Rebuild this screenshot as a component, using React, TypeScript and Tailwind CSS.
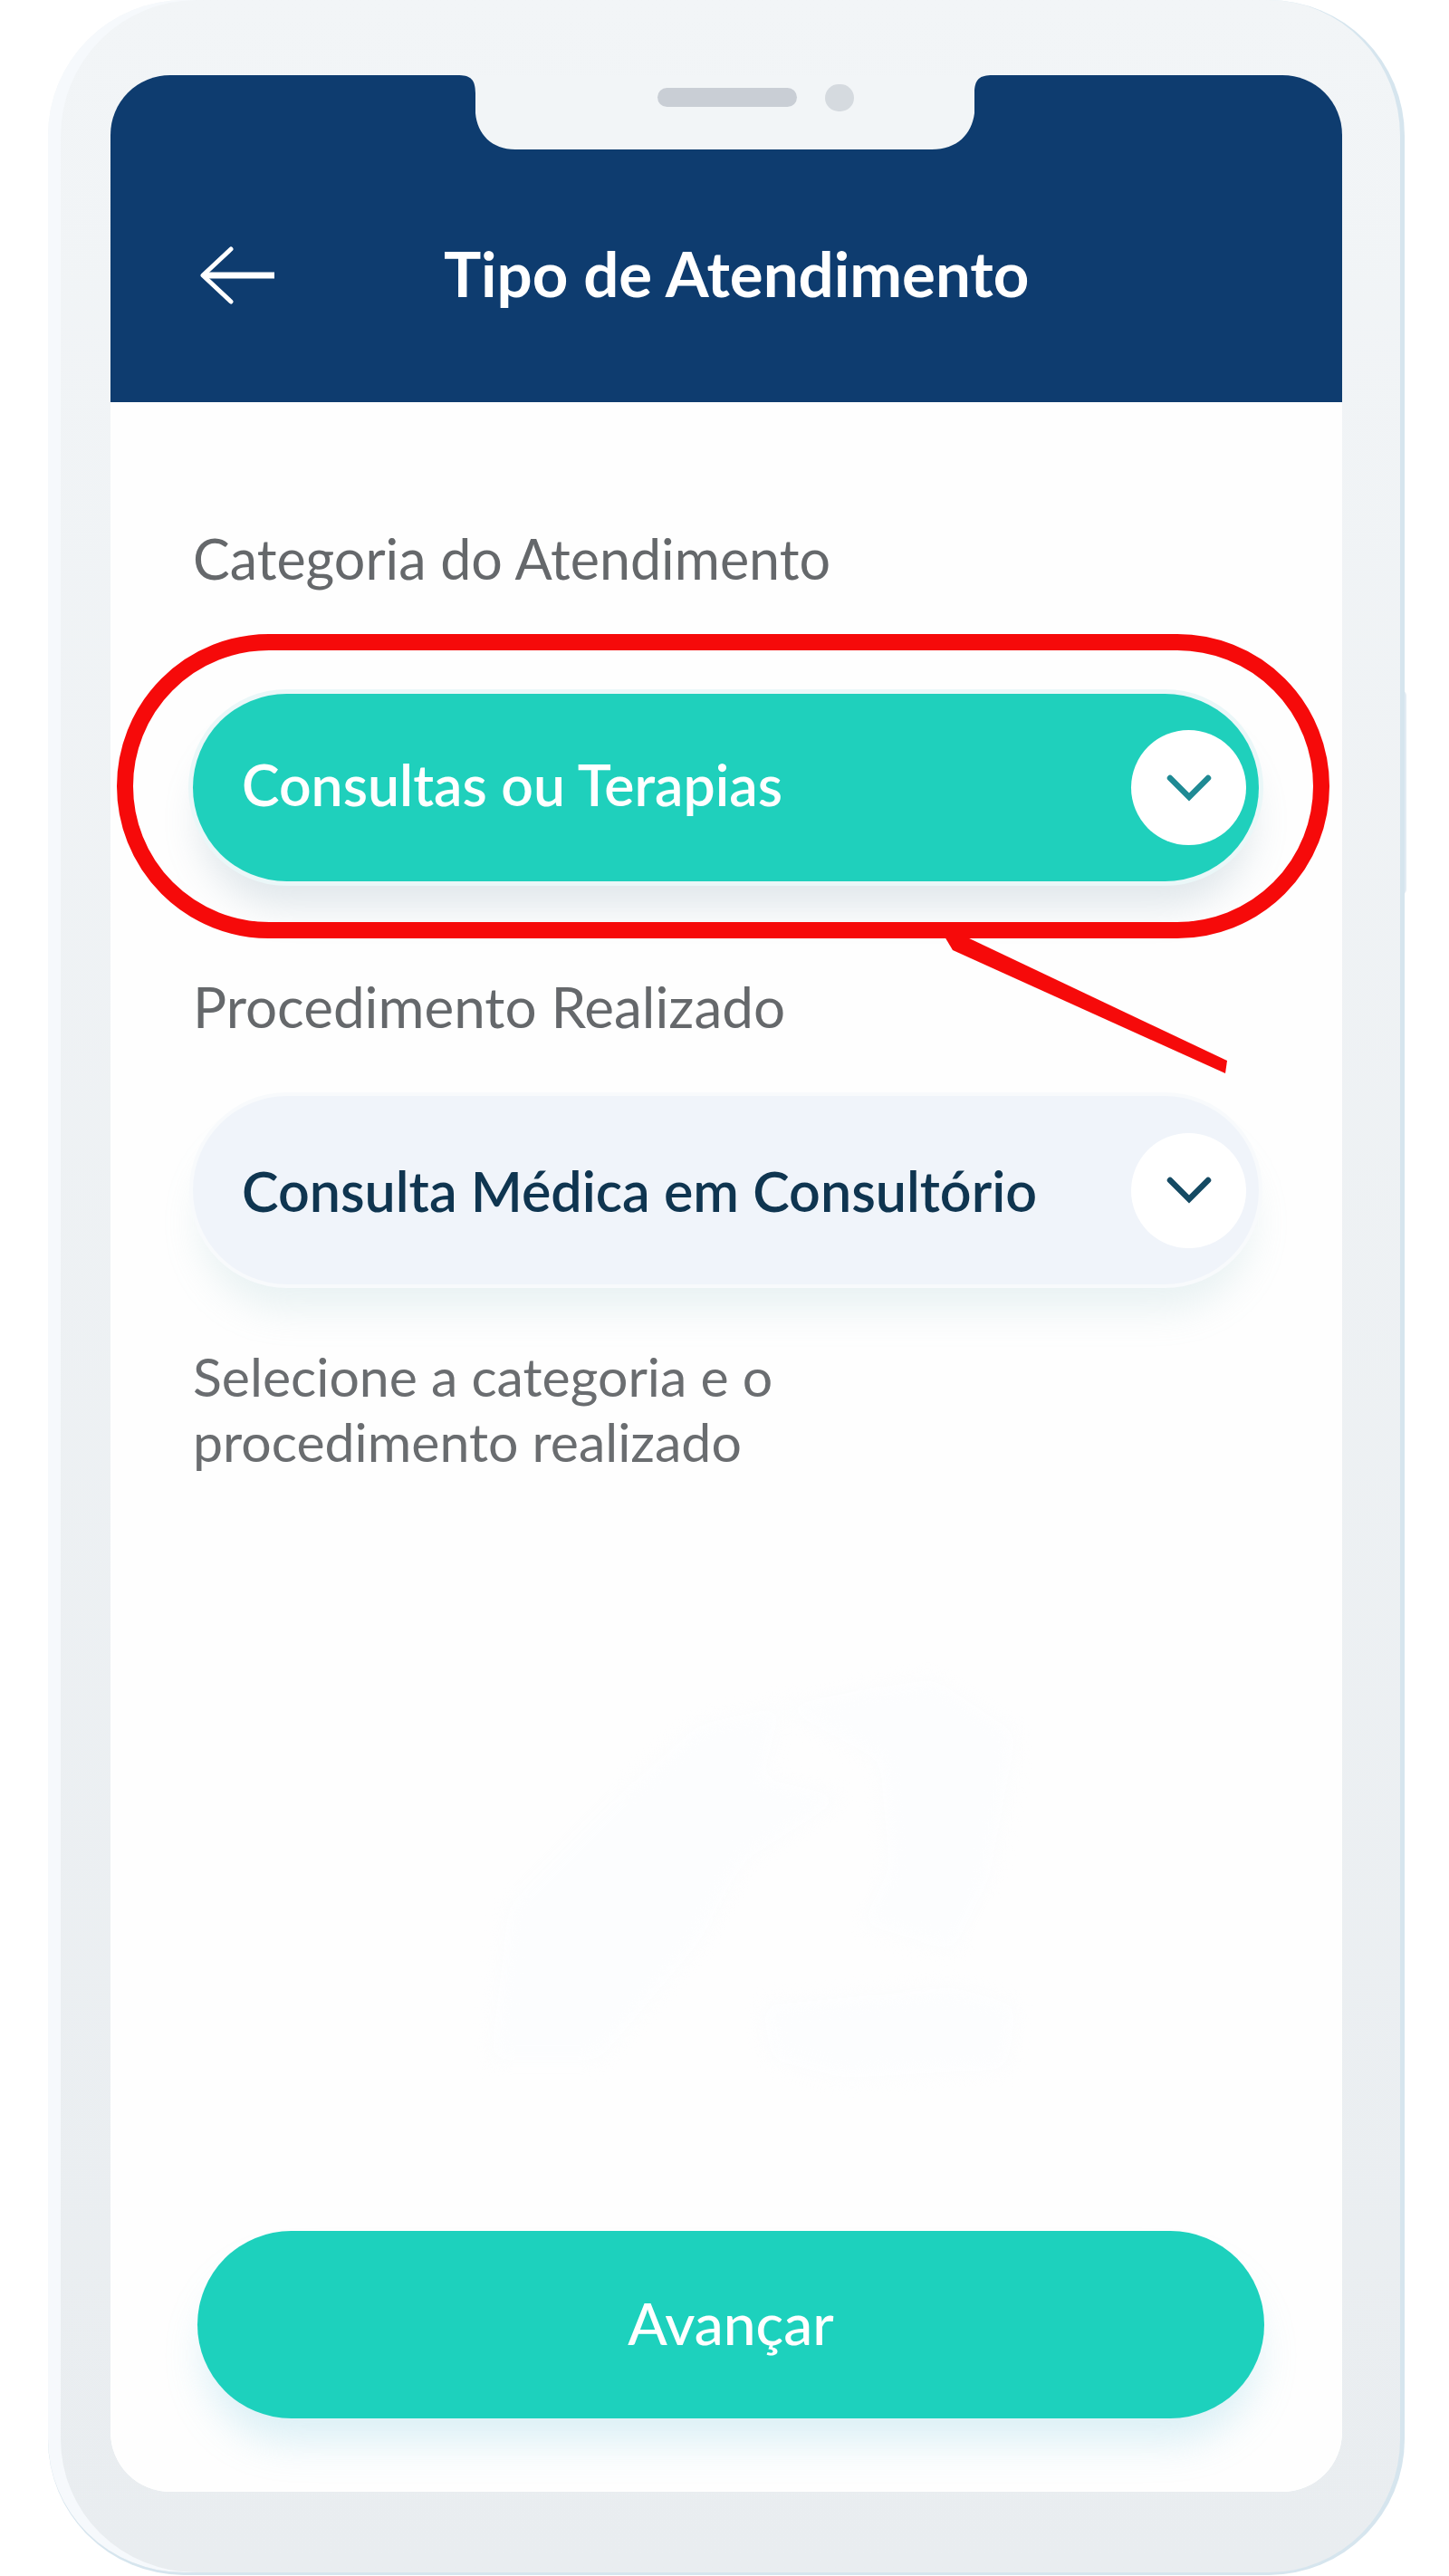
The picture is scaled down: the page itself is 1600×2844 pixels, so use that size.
import React from "react";

function Chevron({ color }: { color: string }) {
  return (
    <svg width="50" height="32" viewBox="0 0 50 32" fill="none">
      <path d="M4 5 L25 26 L46 5" stroke={color} strokeWidth="6.5" strokeLinecap="round" strokeLinejoin="miter" />
    </svg>
  );
}

function Select({ label, active }: { label: string; active: boolean }) {
  return (
    <div
      className={
        active
          ? "flex h-[207px] items-center justify-between rounded-full bg-[#1fd0bc] pl-[54px] pr-[14px] shadow-[0_0_0_5px_#eaf7f8,0_36px_40px_-8px_rgba(130,160,175,0.24)]"
          : "flex h-[208px] items-center justify-between rounded-full bg-[#f0f4fa] pl-[54px] pr-[14px] shadow-[0_0_0_4px_#f8fafc,0_36px_40px_-8px_rgba(160,200,205,0.22)]"
      }
    >
      <span
        className={
          active
            ? "pb-[6px] text-[62.5px] font-semibold leading-none text-white"
            : "text-[61px] font-semibold leading-none text-[#0f3550]"
        }
      >
        {label}
      </span>
      <span className="flex h-[127px] w-[127px] items-center justify-center rounded-full bg-white">
        <Chevron color={active ? "#1f8a94" : "#154a63"} />
      </span>
    </div>
  );
}

export default function App() {
  return (
    <div className="relative h-[2844px] w-[1600px] overflow-hidden bg-white font-['Lato','Liberation_Sans',sans-serif]">
      <div className="absolute right-[47px] top-[762px] h-[226px] w-[8px] rounded-r-md bg-[#e3ecf3]" />
      <div className="relative ml-[53px] h-[2843px] w-[1498px] rounded-[150px] border-r-[5px] border-b-[3px] border-[#d6e5ee] bg-linear-to-b from-[#f2f5f7] to-[#e9edf0] pl-[69px] pr-[64px] pt-[83px] shadow-[inset_14px_0_0_#f6f9fc]">
        <div className="relative flex h-[2668px] flex-col overflow-hidden rounded-[66px] bg-white">
          <header className="relative flex h-[361px] shrink-0 items-start bg-[#0e3c6f] pl-[97px] pt-[189px]">
            <svg className="absolute left-[383px] top-0" width="591" height="82" viewBox="0 0 591 82">
              <path d="M0 0 C14 0 20 4 20 20 L20 42 C22 65 38 82 64 82 L524 82 C552 82 568 65 571 42 L571 20 C571 4 577 0 591 0 Z" fill="#f2f5f7" />
            </svg>
            <div className="absolute left-[604px] top-[14px] h-[21px] w-[154px] rounded-full bg-[#c9ced5]" />
            <div className="absolute left-[789px] top-[10px] h-[30px] w-[32px] rounded-full bg-[#d5dadf]" />
            <svg width="86" height="64" viewBox="0 0 86 64" fill="none" className="shrink-0">
              <path d="M36 3 L5 32 L36 61" stroke="#fff" strokeWidth="5" strokeLinecap="round" strokeLinejoin="round" />
              <path d="M6 32 L84 32" stroke="#fff" strokeWidth="7" />
            </svg>
            <h1 className="ml-[185px] mt-[-10px] text-[69px] font-bold leading-[80px] text-white">Tipo de Atendimento</h1>
          </header>
          <main className="relative flex flex-1 flex-col bg-[#fefefe] pl-[91px] pr-[92px]">
            <svg className="absolute left-[410px] top-[1410px] blur-[10px]" width="620" height="440" viewBox="0 0 620 440" fill="#fcfdfe">
              <path d="M10 420 L30 250 L100 180 L160 120 L240 50 L330 30 L310 110 L400 130 L290 200 L240 290 L130 420 Z" />
              <path d="M330 30 L430 10 L500 0 L590 60 L560 220 L520 300 L420 270 L450 210 L440 90 Z" />
              <path d="M310 360 L420 350 L520 340 L590 360 L580 430 L400 440 L320 420 Z" />
            </svg>
            <p className="relative mt-[135px] text-[61px] leading-[76px] text-[#65686b]">Categoria do Atendimento</p>
            <div className="relative mt-[111px]">
              <Select label="Consultas ou Terapias" active />
            </div>
            <p className="relative mt-[100px] text-[62px] leading-[76px] text-[#65686b]">Procedimento Realizado</p>
            <div className="relative mt-[61px]">
              <Select label="Consulta Médica em Consultório" active={false} />
            </div>
            <p className="relative mt-[66px] text-[59px] leading-[72px] text-[#6a6d70]">
              Selecione a categoria e o
              <br />
              procedimento realizado
            </p>
            <button className="absolute bottom-[81px] left-[96px] flex h-[207px] w-[1178px] items-center justify-center rounded-full bg-[#1dd1bd] pb-[4px] text-[64px] font-medium text-white shadow-[0_34px_44px_-8px_rgba(130,205,225,0.28)]">
              Avançar
            </button>
          </main>
          <svg className="absolute left-[5px] top-[617px]" width="1345" height="489" viewBox="127 700 1345 489" fill="none">
            <path d="M1043 1034 L1066 1034 L1355 1171 L1353 1185 L1052 1049 Z" fill="#f60a0a" />
            <rect x="138" y="709" width="1321" height="318" rx="159" stroke="#f60a0a" strokeWidth="18" />
          </svg>
        </div>
      </div>
    </div>
  );
}
